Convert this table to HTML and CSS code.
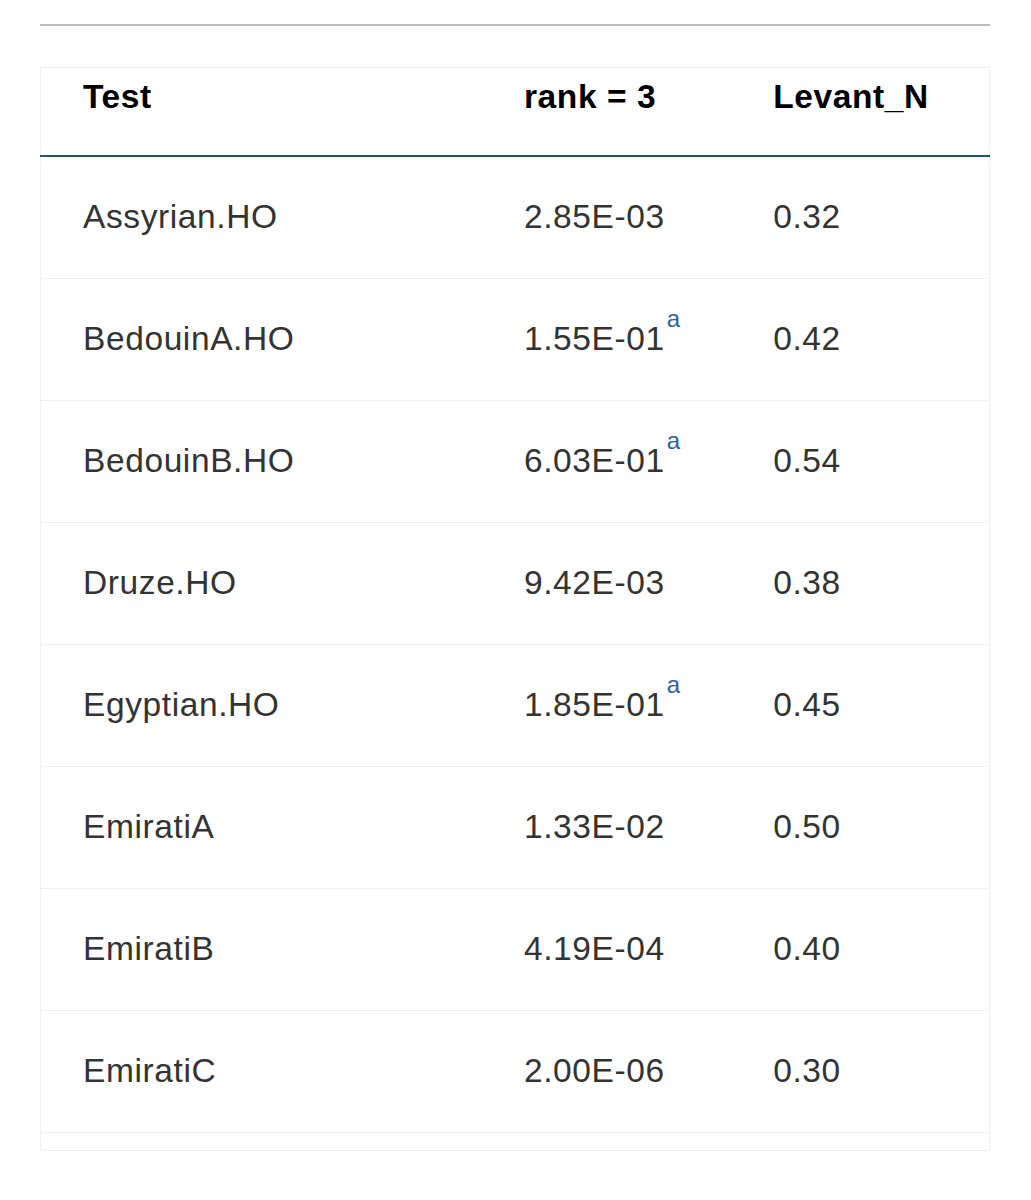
FILE: index.html
```html
<!DOCTYPE html>
<html>
<head>
<meta charset="utf-8">
<link rel="stylesheet" href="styles.css">
</head>
<body>
<div class="page">
  <div class="rule"></div>
  <table class="data">
    <colgroup>
      <col class="c1">
      <col class="c2">
      <col class="c3">
    </colgroup>
    <thead>
      <tr><th>Test</th><th>rank = 3</th><th>Levant_N</th></tr>
    </thead>
    <tbody>
      <tr><td>Assyrian.HO</td><td>2.85E-03</td><td>0.32</td></tr>
      <tr><td>BedouinA.HO</td><td>1.55E-01<sup class="note">a</sup></td><td>0.42</td></tr>
      <tr><td>BedouinB.HO</td><td>6.03E-01<sup class="note">a</sup></td><td>0.54</td></tr>
      <tr><td>Druze.HO</td><td>9.42E-03</td><td>0.38</td></tr>
      <tr><td>Egyptian.HO</td><td>1.85E-01<sup class="note">a</sup></td><td>0.45</td></tr>
      <tr><td>EmiratiA</td><td>1.33E-02</td><td>0.50</td></tr>
      <tr><td>EmiratiB</td><td>4.19E-04</td><td>0.40</td></tr>
      <tr><td>EmiratiC</td><td>2.00E-06</td><td>0.30</td></tr>
    </tbody>
    <tfoot>
      <tr class="spacer"><td colspan="3"></td></tr>
    </tfoot>
  </table>
</div>
</body>
</html>
```

FILE: styles.css
```css
html, body {
  margin: 0;
  padding: 0;
  background: #ffffff;
}

.page {
  padding: 24px 41px 40px 40px;
  font-family: "Liberation Sans", Arial, Helvetica, sans-serif;
}

.rule {
  height: 2px;
  background: #bdbdbd;
  margin-bottom: 41px;
}

.data {
  width: 950px;
  border-collapse: collapse;
  table-layout: fixed;
  border: 1px solid #efefef;
}

.c1 { width: 441px; }
.c2 { width: 249px; }
.c3 { width: 258px; }

.data th,
.data td {
  font-size: 33.5px;
  line-height: 48px;
  letter-spacing: 0.6px;
  text-align: left;
  padding: 0 0 0 42px;
  white-space: nowrap;
}

.data th {
  font-weight: bold;
  color: #000000;
  padding-top: 5px;
  padding-bottom: 34px;
  border-bottom: 2px solid #24507a;
}

.data td {
  color: #333333;
  padding-top: 36px;
  padding-bottom: 37px;
  border-bottom: 1px solid #efefef;
}

.data .note {
  font-size: 24px;
  line-height: 0;
  letter-spacing: 0;
  color: #2a6496;
  vertical-align: baseline;
  position: relative;
  top: -23px;
  margin-left: 2px;
}

.data .spacer td {
  padding: 0;
  height: 17px;
  line-height: 17px;
  border-bottom: 0;
}
```
